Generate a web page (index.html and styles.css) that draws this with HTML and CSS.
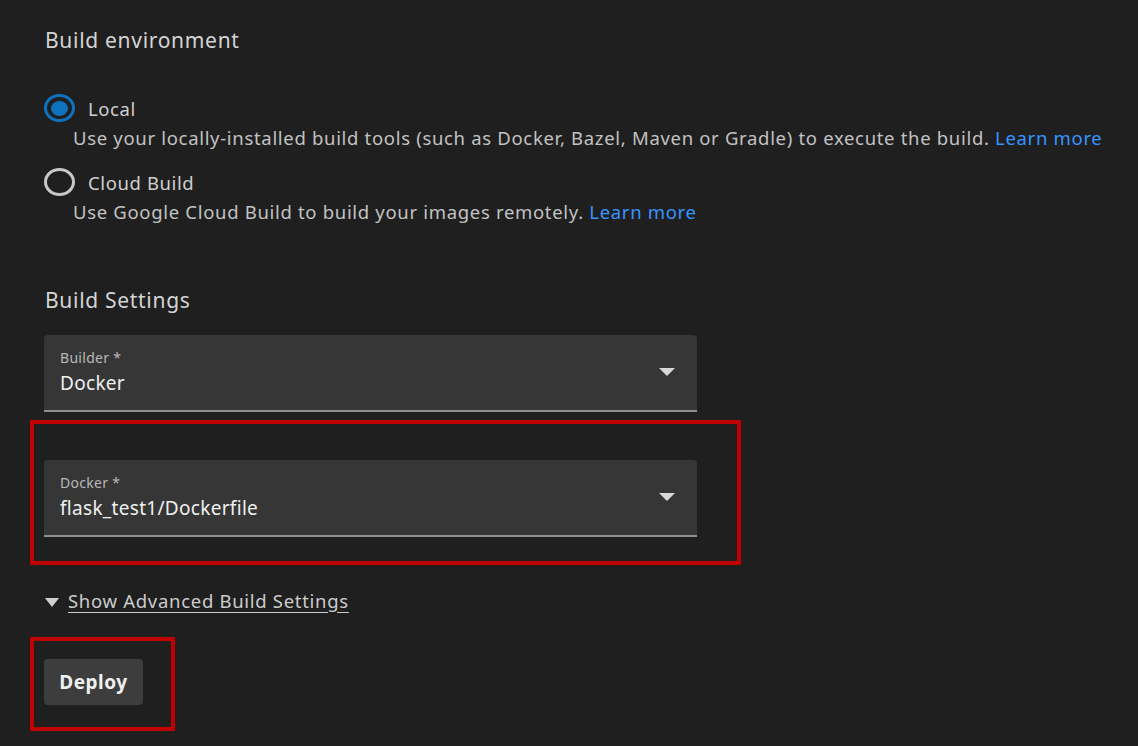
FILE: index.html
```html
<!DOCTYPE html>
<html>
<head>
<meta charset="utf-8">
<link rel="stylesheet" href="styles.css">
</head>
<body>
<div class="page">
  <h2 class="section-title">Build environment</h2>
  <div class="radio-group">
    <div class="radio-item">
      <div class="radio-row">
        <span class="radio checked"><span class="dot"></span></span>
        <span class="radio-label">Local</span>
      </div>
      <div class="radio-desc">Use your locally-installed build tools (such as Docker, Bazel, Maven or Gradle) to execute the build. <a class="link">Learn more</a></div>
    </div>
    <div class="radio-item">
      <div class="radio-row">
        <span class="radio"></span>
        <span class="radio-label">Cloud Build</span>
      </div>
      <div class="radio-desc">Use Google Cloud Build to build your images remotely. <a class="link">Learn more</a></div>
    </div>
  </div>

  <h2 class="section-title settings-title">Build Settings</h2>
  <div class="select-field">
    <div class="select-text">
      <div class="select-label">Builder *</div>
      <div class="select-value">Docker</div>
    </div>
    <span class="caret"></span>
  </div>

  <div class="highlight highlight-docker">
    <div class="select-field">
      <div class="select-text">
        <div class="select-label">Docker *</div>
        <div class="select-value">flask_test1/Dockerfile</div>
      </div>
      <span class="caret"></span>
    </div>
  </div>

  <div class="advanced">
    <span class="adv-caret"></span>
    <a class="adv-link">Show Advanced Build Settings</a>
  </div>

  <div class="highlight highlight-deploy">
    <button class="deploy">Deploy</button>
  </div>
</div>
</body>
</html>
```

FILE: styles.css
```css
html, body {
  margin: 0;
  padding: 0;
  background: #1f1f1f;
  height: 100%;
  overflow: hidden;
}
body {
  font-family: "Noto Sans", "Open Sans", sans-serif;
  color: #cccccc;
}
.page {
  padding: 26px 0 0 45px;
}
.section-title {
  margin: 0;
  font-size: 21px;
  letter-spacing: 0.7px;
  font-weight: 400;
  color: #d4d4d4;
  line-height: 28px;
}
.radio-group {
  margin-top: 38px;
  display: flex;
  flex-direction: column;
  gap: 14px;
}
.radio-row {
  display: flex;
  align-items: center;
  height: 32px;
}
.radio {
  width: 31px;
  height: 28px;
  border: 3px solid #c8c8c8;
  border-radius: 50%;
  box-sizing: border-box;
  display: flex;
  align-items: center;
  justify-content: center;
  margin-left: -1px;
}
.radio.checked {
  border-color: #0f72bf;
}
.radio .dot {
  width: 17px;
  height: 15px;
  border-radius: 50%;
  background: #0f72bf;
}
.radio-label {
  margin-left: 13px;
  font-size: 18.5px;
  letter-spacing: 0.6px;
  color: #d0d0d0;
}
.radio-desc {
  margin-left: 28px;
  font-size: 18.5px;
  letter-spacing: 0.68px;
  line-height: 28px;
  color: #c2c2c2;
}
.link {
  color: #3794ff;
}
.settings-title {
  margin-top: 60px;
}
.select-field {
  width: 653px;
  height: 77px;
  box-sizing: border-box;
  background: #363636;
  border-radius: 4px 4px 0 0;
  border-bottom: 2px solid #8f8f8f;
  display: flex;
  align-items: center;
  padding: 0 22px 0 16px;
}
.page > .select-field {
  margin-top: 21px;
  margin-left: -1px;
}
.select-text {
  flex: 1;
  display: flex;
  flex-direction: column;
  margin-top: 1px;
}
.select-label {
  font-size: 14px;
  letter-spacing: 0.3px;
  line-height: 18px;
  margin-bottom: 2px;
  color: #b8b8b8;
}
.select-value {
  font-size: 19px;
  letter-spacing: 0.3px;
  line-height: 28px;
  color: #f0f0f0;
}
.caret {
  width: 0;
  height: 0;
  border-left: 8px solid transparent;
  border-right: 8px solid transparent;
  border-top: 8px solid #d8d8d8;
  margin-bottom: 2px;
}
.highlight {
  border: 4px solid #c00000;
  box-sizing: border-box;
}
.highlight-docker {
  margin-top: 8px;
  margin-left: -15px;
  width: 711px;
  height: 145px;
  padding: 36px 0 0 10px;
}
.advanced {
  margin-top: 23px;
  display: flex;
  align-items: center;
  height: 24px;
}
.adv-caret {
  width: 0;
  height: 0;
  border-left: 7px solid transparent;
  border-right: 7px solid transparent;
  border-top: 9px solid #d0d0d0;
  margin-left: 0px;
  margin-top: 4px;
}
.adv-link {
  margin-left: 9px;
  font-size: 18.5px;
  letter-spacing: 0.7px;
  color: #cccccc;
  text-decoration: underline;
  text-underline-offset: 4px;
}
.highlight-deploy {
  margin-top: 25px;
  margin-left: -15px;
  width: 145px;
  height: 94px;
  padding: 18px 0 0 10px;
}
.deploy {
  width: 99px;
  height: 46px;
  background: #3d3d3d;
  border: none;
  border-radius: 4px;
  color: #f0f0f0;
  font-family: "Noto Sans", "Open Sans", sans-serif;
  font-size: 19px;
  letter-spacing: 0.5px;
  font-weight: 700;
  padding: 0;
}
```
